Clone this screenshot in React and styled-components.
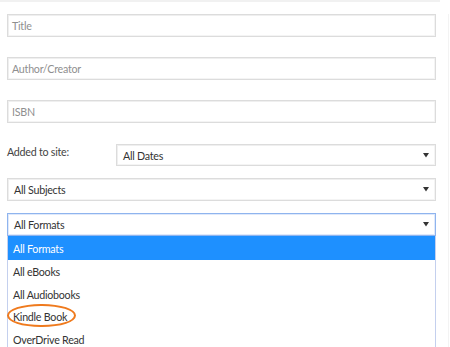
import React from "react";
import styled, { createGlobalStyle } from "styled-components";

const Global = createGlobalStyle`
  html, body { margin: 0; padding: 0; background: #fff; }
  body { font-family: Lato, "Open Sans", sans-serif; }
  * { box-sizing: border-box; }
`;

const Page = styled.div`
  position: relative;
  width: 450px;
  height: 347px;
  overflow: hidden;
  background: #fff;
`;

const TopRule = styled.div`
  width: 440px;
  height: 2px;
  background: #f1f1f1;
`;

const ScrollEdge = styled.div`
  position: absolute;
  right: 1px;
  top: 14px;
  bottom: 0;
  width: 1px;
  background: #f3f3f3;
`;

const Form = styled.div`
  display: flex;
  flex-direction: column;
  width: 429px;
  margin: 12px 0 0 7px;
`;

const Field = styled.div`
  height: ${p => p.$h || 23}px;
  border: 1px solid #dcdcdc;
  box-shadow: inset 1px 1px 0 #efefef, inset -1px -1px 0 #f4f4f4;
  background: #fff;
  display: flex;
  align-items: center;
  padding: 0 ${p => (p.$select ? 6 : 4)}px;
  font-size: 10.7px;
  letter-spacing: -0.25px;
  color: ${p => (p.$placeholder ? "#8f8f8f" : "#333")};
  margin-top: ${p => p.$gap || 0}px;
  justify-content: space-between;
  ${p => p.$focus && `
    border-color: #8fb4ee;
    box-shadow: inset 0 0 0 1px #dfe9fb;
  `}
  flex: ${p => (p.$grow ? 1 : "none")};
`;

const Row = styled.div`
  display: flex;
  align-items: center;
  margin-top: 21px;
`;

const Label = styled.div`
  width: 109px;
  font-size: 10.7px;
  letter-spacing: -0.25px;
  color: #444;
  padding-bottom: 7px;
`;

const Arrow = () => (
  <svg width="6" height="5" viewBox="0 0 6 5">
    <path d="M0 0 H6 L3 4.5 Z" fill="#333" />
  </svg>
);

const List = styled.div`
  border-left: 1px solid #c4d0ee;
  border-right: 1px solid #c4d0ee;
  display: flex;
  flex-direction: column;
`;

const Option = styled.div`
  position: relative;
  height: ${p => (p.$active ? 24 : 22.7)}px;
  flex: none;
  display: flex;
  align-items: center;
  padding: 0 5px;
  font-size: 10.7px;
  letter-spacing: -0.25px;
  color: ${p => (p.$active ? "#fff" : "#333")};
  background: ${p => (p.$active ? "#1e90ff" : "#fff")};
`;

const Circle = styled.div`
  position: absolute;
  left: -1px;
  top: -1.5px;
  width: 69px;
  height: 23.5px;
  border: 2px solid #ef7a1d;
  border-radius: 50%;
`;

export default function App() {
  return (
    <Page>
      <Global />
      <TopRule />
      <ScrollEdge />
      <Form>
        <Field $placeholder>Title</Field>
        <Field $placeholder $gap={20}>Author/Creator</Field>
        <Field $placeholder $gap={20}>ISBN</Field>
        <Row>
          <Label>Added to site:</Label>
          <Field $select $grow $h={22}>
            All Dates <Arrow />
          </Field>
        </Row>
        <Field $select $gap={12}>
          All Subjects <Arrow />
        </Field>
        <Field $select $focus $gap={12}>
          All Formats <Arrow />
        </Field>
        <List>
          <Option $active>All Formats</Option>
          <Option>All eBooks</Option>
          <Option>All Audiobooks</Option>
          <Option>
            Kindle Book
            <Circle />
          </Option>
          <Option>OverDrive Read</Option>
        </List>
      </Form>
    </Page>
  );
}
